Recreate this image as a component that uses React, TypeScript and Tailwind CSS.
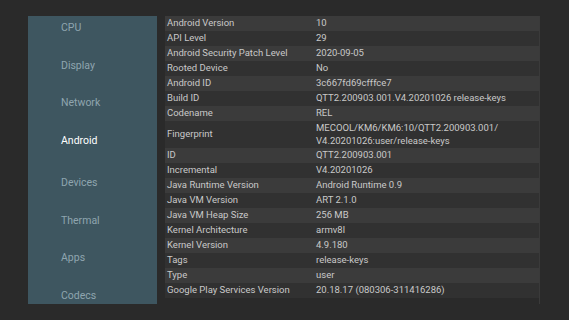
import React from 'react';

const menu = ['CPU', 'Display', 'Network', 'Android', 'Devices', 'Thermal', 'Apps', 'Codecs'];

const rows: [string, string][] = [
  ['Android Version', '10'],
  ['API Level', '29'],
  ['Android Security Patch Level', '2020-09-05'],
  ['Rooted Device', 'No'],
  ['Android ID', '3c667fd69cfffce7'],
  ['Build ID', 'QTT2.200903.001.V4.20201026 release-keys'],
  ['Codename', 'REL'],
  ['Fingerprint', 'MECOOL/KM6/KM6:10/QTT2.200903.001/\nV4.20201026:user/release-keys'],
  ['ID', 'QTT2.200903.001'],
  ['Incremental', 'V4.20201026'],
  ['Java Runtime Version', 'Android Runtime 0.9'],
  ['Java VM Version', 'ART 2.1.0'],
  ['Java VM Heap Size', '256 MB'],
  ['Kernel Architecture', 'armv8l'],
  ['Kernel Version', '4.9.180'],
  ['Tags', 'release-keys'],
  ['Type', 'user'],
  ['Google Play Services Version', '20.18.17 (080306-311416286)'],
];

export default function App() {
  return (
    <div
      className="w-[569px] h-[320px] bg-[#2a2a2a] flex items-start pt-[16px] overflow-hidden"
      style={{ fontFamily: 'Roboto, "Noto Sans", sans-serif' }}
    >
      {/* side menu */}
      <div className="ml-[28px] w-[129px] h-[288px] bg-[#3e5660] flex flex-col pt-[5px] gap-[23.5px] overflow-hidden">
        {menu.map((m) => (
          <div
            key={m}
            className={`pl-[33px] h-[14px] leading-[14px] text-[10.5px] ${
              m === 'Android' ? 'text-white mb-[5px]' : 'text-[#8fa5af]'
            }`}
          >
            {m}
          </div>
        ))}
      </div>

      {/* info table */}
      <div className="ml-[8px] w-[375px] h-[288px] flex flex-col overflow-hidden border-r border-[#3a3a3a]">
        {rows.map(([k, v], i) => {
          const multi = v.includes('\n');
          return (
            <div
              key={k}
              className={`flex shrink-0 pl-[2px] text-[9.5px] text-[#c9c9c9] items-center ${
                multi ? 'h-[27px]' : 'h-[15px]'
              } ${i % 2 === 0 ? 'bg-[#3b3b3b]' : 'bg-[#313131]'}`}
            >
              <div className="w-[149px] shrink-0 whitespace-nowrap">{k}</div>
              <div className="whitespace-pre leading-[12.5px]">{v}</div>
            </div>
          );
        })}
      </div>
    </div>
  );
}
